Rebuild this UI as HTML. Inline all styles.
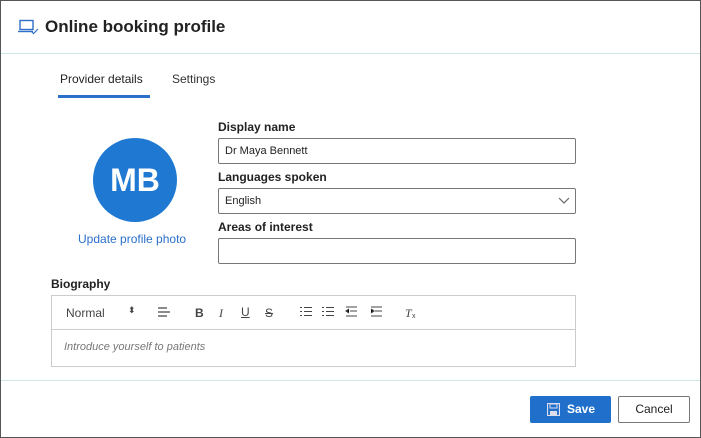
<!DOCTYPE html>
<html><head><style>
*{box-sizing:border-box;margin:0;padding:0}
body{width:701px;height:438px;background:#fff;font-family:"Liberation Sans",sans-serif;position:relative;overflow:hidden;color:#222}
.frame{position:absolute;left:0;top:0;width:701px;height:438px;border:1px solid #555}
.abs{position:absolute}
.lbl{font-size:12px;font-weight:bold;color:#222}
.inp{border:1px solid #777;border-radius:2px;height:26px;font-size:11px;padding:0 6px;line-height:24px;color:#222}
.tb{font-size:12px;color:#444}
</style></head><body>
<div class="frame"></div>
<svg class="abs" style="left:17px;top:19px" width="22" height="16" viewBox="0 0 22 16"><rect x="3" y="1.5" width="13" height="9" fill="none" stroke="#2f6fc8" stroke-width="1.4"/><path d="M1 12.5h15" stroke="#2f6fc8" stroke-width="1.4"/><path d="M14 12l2.5 2.5L21 10" fill="none" stroke="#2f6fc8" stroke-width="1.2"/></svg>
<div class="abs" style="left:45px;top:17px;font-size:17px;font-weight:bold;color:#222">Online booking profile</div>
<div class="abs" style="left:1px;top:53px;width:699px;height:1px;background:#cfe6e6"></div>
<div class="abs" style="left:60px;top:72px;font-size:12px;color:#222">Provider details</div>
<div class="abs" style="left:172px;top:72px;font-size:12px;color:#333">Settings</div>
<div class="abs" style="left:58px;top:95px;width:92px;height:3px;background:#2a6fc9"></div>
<div class="abs" style="left:93px;top:138px;width:84px;height:84px;border-radius:50%;background:#1f78d1;color:#fff;font-size:32px;font-weight:bold;text-align:center;line-height:84px">MB</div>
<div class="abs" style="left:78px;top:232px;font-size:12px;color:#2a6fc9">Update profile photo</div>
<div class="abs lbl" style="left:218px;top:120px">Display name</div>
<div class="abs inp" style="left:218px;top:138px;width:358px">Dr Maya Bennett</div>
<div class="abs lbl" style="left:218px;top:170px">Languages spoken</div>
<div class="abs inp" style="left:218px;top:188px;width:358px">English</div>
<svg class="abs" style="left:558px;top:197px" width="12" height="8"><path d="M1 1l5 5 5-5" fill="none" stroke="#666" stroke-width="1.2"/></svg>
<div class="abs lbl" style="left:218px;top:220px">Areas of interest</div>
<div class="abs inp" style="left:218px;top:238px;width:358px"></div>
<div class="abs lbl" style="left:51px;top:277px">Biography</div>
<div class="abs" style="left:51px;top:295px;width:525px;height:72px;border:1px solid #ccc"></div>
<div class="abs" style="left:52px;top:329px;width:523px;height:1px;background:#ccc"></div>
<div class="abs tb" style="left:66px;top:306px">Normal</div>
<div class="abs tb" style="left:128px;top:305px;font-size:9px">⬍</div>
<svg class="abs" style="left:158px;top:307px" width="12" height="10"><path d="M0 1h9M0 5h12M0 9h9" stroke="#444" stroke-width="1.2"/></svg>
<div class="abs tb" style="left:195px;top:306px;font-weight:bold">B</div>
<div class="abs tb" style="left:219px;top:306px;font-family:'Liberation Serif',serif;font-style:italic">I</div>
<div class="abs tb" style="left:241px;top:305px;text-decoration:underline">U</div>
<div class="abs tb" style="left:265px;top:306px;text-decoration:line-through">S</div>
<svg class="abs" style="left:300px;top:306px" width="130" height="12"><g stroke="#444" stroke-width="1.1"><path d="M4 1.5h8M4 5.5h8M4 9.5h8M0 1.5h2M0 5.5h2M0 9.5h2"/><path d="M26 1.5h8M26 5.5h8M26 9.5h8M22 1.5h2M22 5.5h2M22 9.5h2"/><path d="M46 1h11M50 5h7M46 10h11M49 3l-3 2 3 2"/><path d="M71 1h11M75 5h7M71 10h11M71 3l3 2-3 2"/></g><text x="105" y="11" font-size="12" font-style="italic" fill="#444" font-family="Liberation Serif" text-decoration="underline">T</text><text x="112" y="12" font-size="7" fill="#444">x</text></svg>
<div class="abs" style="left:64px;top:341px;font-size:11px;font-style:italic;color:#777">Introduce yourself to patients</div>
<div class="abs" style="left:1px;top:380px;width:699px;height:1px;background:#cfe6e6"></div>
<div class="abs" style="left:530px;top:396px;width:81px;height:27px;background:#1f6fcb;border-radius:2px;color:#fff;font-size:12px;font-weight:bold;line-height:27px;padding-left:37px">Save</div>
<svg class="abs" style="left:547px;top:403px" width="13" height="13"><rect x="0.5" y="0.5" width="12" height="12" fill="none" stroke="#dde" stroke-width="1.2"/><rect x="3" y="1" width="7" height="4" fill="none" stroke="#dde"/><rect x="3" y="8" width="7" height="4" fill="#dde"/></svg>
<div class="abs" style="left:618px;top:396px;width:72px;height:27px;border:1px solid #777;border-radius:2px;font-size:12px;line-height:25px;text-align:center;color:#222">Cancel</div>
</body></html>
